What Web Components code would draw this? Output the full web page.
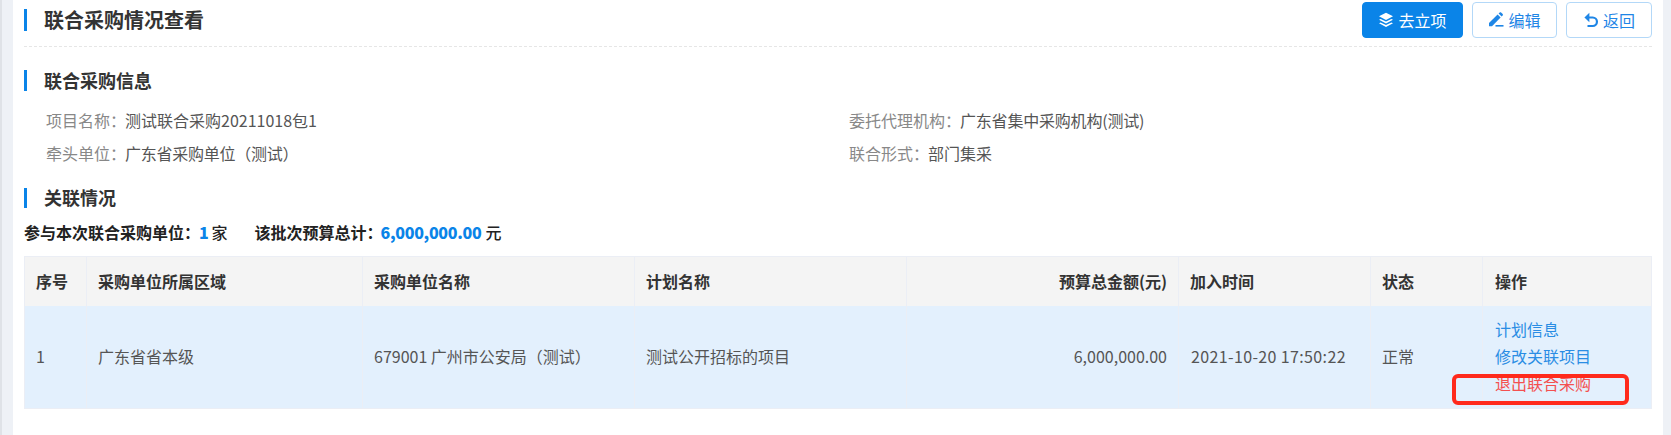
<!DOCTYPE html>
<html lang="zh-CN">
<head>
<meta charset="utf-8">
<title>联合采购情况查看</title>
<style>
html,body{margin:0;height:435px;overflow:hidden;background:#eef1f6}
body{box-sizing:border-box;border-left:2px solid #dfe2e7;font-family:"Noto Sans CJK SC","Noto Sans",sans-serif;font-size:16px}
</style>
</head>
<body>
<cg-page>
  <cg-header slot="header" title-text="联合采购情况查看">
    <cg-button variant="primary" icon="layers">去立项</cg-button>
    <cg-button icon="pen">编辑</cg-button>
    <cg-button icon="undo" style="width:86px">返回</cg-button>
  </cg-header>
  <cg-section-title style="margin-top:23px;">联合采购信息</cg-section-title>
  <cg-info>
    <cg-field label="项目名称：">测试联合采购20211018包1</cg-field>
    <cg-field label="委托代理机构：" style="letter-spacing:-.2px">广东省集中采购机构(测试)</cg-field>
    <cg-field label="牵头单位：" style="letter-spacing:-.25px">广东省采购单位（测试）</cg-field>
    <cg-field label="联合形式：">部门集采</cg-field>
  </cg-info>
  <cg-section-title style="margin-top:18px;height:20px;line-height:18px">关联情况</cg-section-title>
  <cg-stats></cg-stats>
  <cg-table></cg-table>
</cg-page>
<script>
const ICONS={
 layers:'<svg width="16" height="16" viewBox="0 0 16 16" fill="currentColor"><path d="M8 .8 15 4.3 8 7.9 1 4.3Z"/><path d="M2.6 6.9 8 9.6l5.4-2.7 1.6.9-7 3.6-7-3.6Z"/><path d="M2.6 10.4 8 13.1l5.4-2.7 1.6.9-7 3.8-7-3.8Z"/></svg>',
 pen:'<svg width="16" height="16" viewBox="0 0 16 16" fill="currentColor"><path d="M1 14.2v-3.1L9.6 2.5l3 3L4 14.2Z"/><path d="M10.6 1.5 11.7.5c.4-.4 1-.4 1.4 0l1.6 1.6c.4.4.4 1 0 1.4l-1.1 1.1Z"/><rect x="7.5" y="13" width="8" height="1.6"/></svg>',
 undo:'<svg width="16" height="16" viewBox="0 0 16 16" fill="none" stroke="currentColor" stroke-width="2.2"><path d="M3.5 5.5h6.2a4 4 0 0 1 0 8.5H4.5"/><path d="M6.4 .8 1.4 5.5l5 4.7" fill="currentColor" stroke="none"/></svg>'
};
function def(name,css,html){
  customElements.define(name,class extends HTMLElement{
    connectedCallback(){
      if(this.shadowRoot)return;
      const r=this.attachShadow({mode:'open'});
      r.innerHTML='<style>'+css+'</style>'+(typeof html==='function'?html(this):html);
    }
  });
}
def('cg-page',`
 :host{display:block;box-sizing:border-box;width:1650px;height:435px;margin-left:11px;background:#fff;padding:2px 11px 0 11px}
 `,'<slot name="header"></slot><slot></slot>');
def('cg-header',`
 :host{display:flex;align-items:center;justify-content:space-between;height:36px;padding-bottom:8px;border-bottom:1px dashed #e6e6e6}
 .t{display:flex;align-items:center;height:22px;border-left:3px solid #0a84e8;padding-left:17px;font-size:20px;font-weight:700;color:#333;line-height:22px}
 .b{display:flex;gap:9px}
 `,h=>`<div class="t">${h.getAttribute('title-text')}</div><div class="b"><slot></slot></div>`);
def('cg-button',`
 :host{display:inline-flex;align-items:center;justify-content:center;gap:4px;box-sizing:border-box;height:36px;width:85px;border:1px solid #b3d8f8;border-radius:4px;background:#fff;color:#1f86e6;font-size:16px;line-height:1}
 :host([variant=primary]){width:101px;background:#0a84e8;border-color:#0a84e8;color:#fff}
 svg{display:block}
 `,h=>ICONS[h.getAttribute('icon')]+'<slot></slot>');
def('cg-section-title',`
 :host{display:block;height:21px;border-left:3px solid #0a84e8;padding-left:17px;font-size:18px;font-weight:700;line-height:21px;color:#333}
 `,'<slot></slot>');
def('cg-info',`
 :host{display:grid;grid-template-columns:803px 1fr;grid-auto-rows:33px;margin:13px 0 0 22px}
 `,'<slot></slot>');
def('cg-field',`
 :host{display:flex;align-items:center;color:#555;font-size:16px;line-height:33px;white-space:nowrap}
 .l{color:#888;margin-right:-1px;letter-spacing:0}
 `,h=>`<span class="l">${h.getAttribute('label')}</span><slot></slot>`);
def('cg-stats',`
 :host{display:flex;align-items:center;height:27px;margin-top:10px;font-size:16px;font-weight:700;color:#222;white-space:nowrap}
 b{color:#0a84e8;margin:0 4px 0 -1px;letter-spacing:-.3px}
 b.n{margin-left:-2px}
 b.one{margin-right:3px}
 .g{width:27px}
 `,`<span>参与本次联合采购单位：</span><b class="one">1</b><span style="font-weight:500">家</span><span class="g"></span><span>该批次预算总计：</span><b class="n">6,000,000.00</b><span style="font-weight:500">元</span>`);
def('cg-table',`
 :host{display:block;position:relative;margin-top:11px;width:1628px;font-size:16px;color:#555}
 .g{display:grid;grid-template-columns:63px 276px 272px 272px 272px 192px 112px 169px;grid-template-rows:50px 103px}
 .c{box-sizing:border-box;display:flex;flex-direction:column;justify-content:center;padding:0 11px 0 11px;border-right:1px solid #ebeef5;white-space:nowrap;line-height:27px}
 .c:nth-child(8n+1){padding-left:11px;border-left:1px solid #ebeef5}
 .h{background:#f4f4f4;font-weight:700;color:#333;border-top:1px solid #ebeef5;}
 .d{background:#e3f0fd;border-bottom:1px solid #ebeef5;padding-bottom:2px}
 .r{align-items:flex-end}
 .c:nth-child(8n){padding-left:12px}
 .t{letter-spacing:.37px;padding-left:12px}
 a{color:#2a8de4;text-decoration:none;display:block}
 a.x{color:#f45050}
 .mark{position:absolute;left:1428px;top:118px;width:177px;height:31px;box-sizing:border-box;border:4px solid #ff2a1c;border-radius:6px}
 `,`<div class="g">
 <div class="c h">序号</div><div class="c h">采购单位所属区域</div><div class="c h">采购单位名称</div><div class="c h">计划名称</div><div class="c h r">预算总金额(元)</div><div class="c h">加入时间</div><div class="c h">状态</div><div class="c h">操作</div>
 <div class="c d">1</div><div class="c d">广东省省本级</div><div class="c d">679001 广州市公安局（测试）</div><div class="c d">测试公开招标的项目</div><div class="c d r">6,000,000.00</div><div class="c d t">2021-10-20 17:50:22</div><div class="c d">正常</div><div class="c d"><a href="#">计划信息</a><a href="#">修改关联项目</a><a class="x" href="#">退出联合采购</a></div>
 </div><div class="mark"></div>`);
</script>
</body>
</html>
